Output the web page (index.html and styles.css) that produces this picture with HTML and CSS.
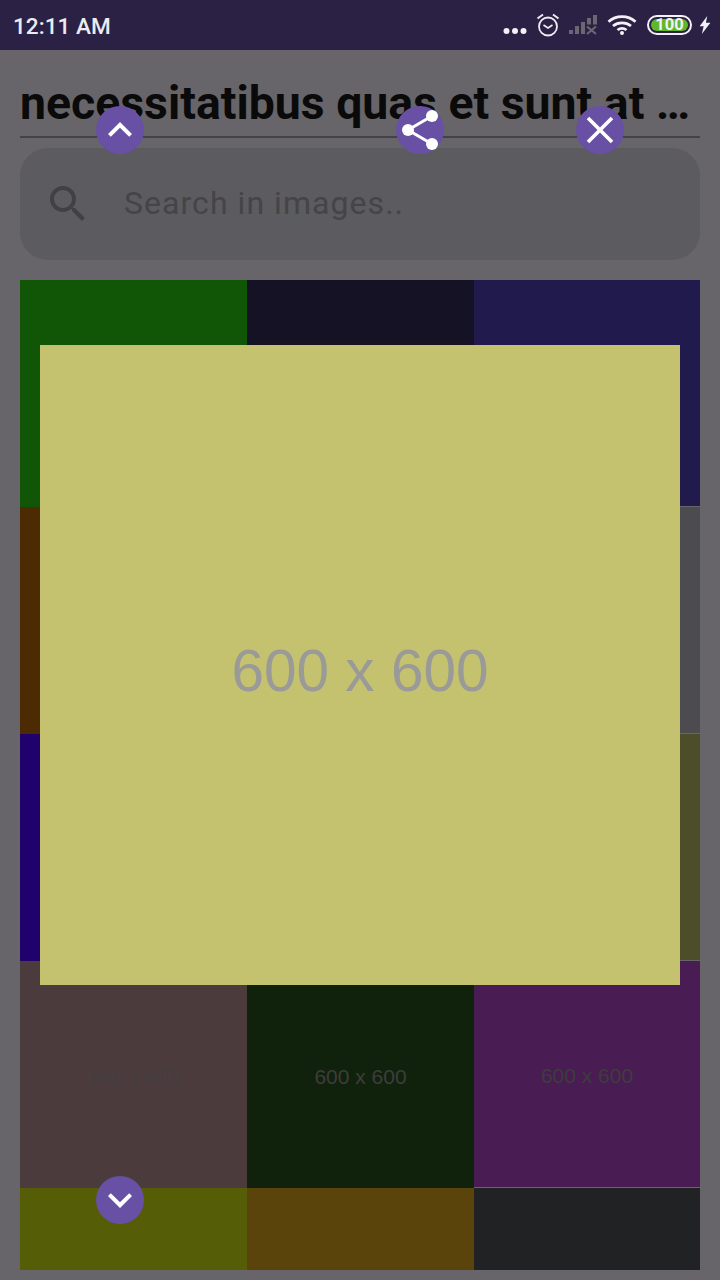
FILE: index.html
```html
<!DOCTYPE html>
<html lang="en">
<head>
<meta charset="utf-8">
<title>Images</title>
<link rel="stylesheet" href="styles.css">
</head>
<body>
<div class="page">
  <header class="status">
    <span class="time">12:11 AM</span>
    <div class="status-icons">
      <svg class="ic-dots" width="24" height="8" viewBox="0 0 24 8"><circle cx="3.500" cy="4" r="3"/><circle cx="12" cy="4" r="3"/><circle cx="20.500" cy="4" r="3"/></svg>
      <svg class="ic-alarm" width="26" height="24" viewBox="0 0 26 24"><circle cx="13" cy="13.500" r="9" stroke-width="1.800"/><path d="M8.500 12l4.500 3 4.500-3" stroke-width="1.600"/><path d="M2.500 5.500L8 1.500M23.500 5.500L18 1.500" stroke-width="2"/></svg>
      <svg class="ic-signal" width="28" height="20" viewBox="0 0 28 20"><rect x="0" y="15" width="4" height="4"/><rect x="6" y="11" width="4" height="8"/><rect x="12" y="7" width="4" height="12"/><rect x="18" y="3" width="4" height="6.500"/><rect x="24" y="0" width="4" height="9.500"/><path d="M18 11.500l9 7.500M27 11.500l-9 7.500" stroke="#6b6672" stroke-width="2.200" fill="none"/></svg>
      <svg class="ic-wifi" width="30" height="20" viewBox="0 0 30 20"><path d="M1.500 6.800C9 0 21 0 28.500 6.800"/><path d="M6 11c5-4.200 13-4.200 18 0"/><path d="M10.500 15c2.700-2 6.300-2 9 0"/><circle class="wifi-dot" cx="15" cy="18" r="2"/></svg>
      <div class="battery"><span class="battery-level">100</span></div>
      <svg class="ic-bolt" width="14" height="18" viewBox="0 0 14 20"><path d="M9.500 0L1 11.500h4.500L3.500 20 13 7.500H8z"/></svg>
    </div>
  </header>

  <main class="content">
    <h1 class="title">necessitatibus quas et sunt at …</h1>
    <div class="search">
      <svg class="search-icon" width="48" height="48" viewBox="0 0 24 24"><path d="M15.500 14h-.79l-.28-.27A6.471 6.471 0 0 0 16 9.500 6.500 6.500 0 1 0 9.500 16c1.610 0 3.090-.59 4.230-1.570l.27.28v.79l5 4.990L20.490 19l-4.990-5zm-6 0C7.010 14 5 11.990 5 9.500S7.010 5 9.500 5 14 7.010 14 9.500 11.990 14 9.500 14z"/></svg>
      <span class="search-text">Search in images..</span>
    </div>
    <div class="grid">
      <div class="tile c1"><span>600 x 600</span></div>
      <div class="tile c2"><span>600 x 600</span></div>
      <div class="tile c3"><span>600 x 600</span></div>
      <div class="tile c4"><span>600 x 600</span></div>
      <div class="tile c5"><span>600 x 600</span></div>
      <div class="tile c6"><span>600 x 600</span></div>
      <div class="tile c7"><span>600 x 600</span></div>
      <div class="tile c8"><span>600 x 600</span></div>
      <div class="tile c9"><span>600 x 600</span></div>
      <div class="tile c10"><span class="faint">600 x 600</span></div>
      <div class="tile c11"><span>600 x 600</span></div>
      <div class="tile c12"><span>600 x 600</span></div>
      <div class="tile c13"></div>
      <div class="tile c14"></div>
      <div class="tile c15"></div>
    </div>
  </main>

  <div class="preview">600 x 600</div>

  <button class="fab fab-up" aria-label="Previous"><svg width="48" height="48" viewBox="0 0 24 24"><path d="M7.410 15.410L12 10.830l4.590 4.580L18 14l-6-6-6 6z"/></svg></button>
  <button class="fab fab-share" aria-label="Share"><svg width="48" height="48" viewBox="0 0 48 48"><path class="share-line" d="M36 10L12 24l24 14"/><circle cx="36" cy="10" r="6"/><circle cx="12" cy="24" r="6"/><circle cx="36" cy="38" r="6"/></svg></button>
  <button class="fab fab-close" aria-label="Close"><svg width="48" height="48" viewBox="0 0 48 48"><path class="close-x" d="M12 12l24 24M36 12L12 36"/></svg></button>
  <button class="fab fab-down" aria-label="Next"><svg width="48" height="48" viewBox="0 0 24 24"><path d="M7.410 8.590L12 13.170l4.590-4.580L18 10l-6 6-6-6z"/></svg></button>
</div>
</body>
</html>
```

FILE: styles.css
```css
* { box-sizing: border-box; }
html, body { margin: 0; padding: 0; }
body { background: #676569; font-family: "Roboto", "Liberation Sans", sans-serif; }
.page { position: relative; width: 720px; height: 1280px; overflow: hidden; background: #676569; }

.status { height: 50px; background: #2a2145; display: flex; align-items: center; justify-content: space-between; padding: 2px 8px 0 13px; }
.time { font-size: 22.600px; font-weight: 500; color: #ecebf1; }
.status-icons { display: flex; align-items: center; margin-top: -2px; }
.status-icons svg { display: block; flex: none; }
.ic-dots { fill: #f2f1f5; margin-top: 11px; }
.ic-alarm { fill: none; stroke: #eeedf2; margin-left: 8px; }
.ic-signal { fill: #6b6672; margin-left: 8px; }
.ic-wifi { fill: none; stroke: #f2f1f5; stroke-width: 2.800; margin-left: 10px; }
.wifi-dot { fill: #f2f1f5; stroke: none; }
.battery { margin-left: 10px; width: 45px; height: 20px; border: 2px solid #f2f1f5; border-radius: 10px; padding: 2px; display: flex; }
.battery-level { flex: 1; background: #5fb82b; border-radius: 6px; color: #f2f1f5; font-size: 16.500px; font-weight: 700; line-height: 12px; text-align: center; }
.ic-bolt { fill: #f2f1f5; margin-left: 6px; }

.content { padding: 0 20px; }
.title { margin: 0; height: 88px; padding-top: 24px; border-bottom: 2px solid #444247; font-size: 46.400px; line-height: 58px; font-weight: 700; color: #0a0a0a; white-space: nowrap; overflow: hidden; }
.search { margin-top: 10px; height: 112px; background: #5c5b5f; border-radius: 28px; display: flex; align-items: center; padding: 0 0 0 24px; }
.search-icon { display: block; fill: #414044; flex: none; }
.search-text { margin-left: 32px; margin-bottom: 2px; font-size: 32px; letter-spacing: 1.050px; color: #454447; }

.grid { margin-top: 20px; display: grid; grid-template-columns: 227px 227px 226px; grid-auto-rows: 227px; height: 990px; overflow: hidden; }
.tile { display: flex; align-items: center; justify-content: center; padding-top: 4px; font-family: "Liberation Sans", sans-serif; font-size: 21px; color: #3d3d3d; }
.tile:nth-child(3n) { margin-bottom: 1px; }
.c1 { background: #115506; }
.c2 { background: #161226; }
.c3 { background: #211a4c; }
.c4 { background: #4d2b02; }
.c5 { background: #222222; }
.c6 { background: #4b4b50; }
.c7 { background: #21016b; }
.c8 { background: #222222; }
.c9 { background: #4d4d2a; }
.c10 { background: #4c3b3c; }
.c11 { background: #10220c; }
.c12 { background: #4a1c54; }
.c13 { background: #555d06; }
.c14 { background: #5a440b; }
.c15 { background: #212224; }
.c10 .faint { color: #454040; }

.preview { position: absolute; left: 40px; top: 345px; width: 640px; height: 640px; padding-top: 10px; background: #c4c26f; display: flex; align-items: center; justify-content: center; font-family: "Liberation Sans", sans-serif; font-size: 58.500px; color: #9a9a98; }

.fab { position: absolute; width: 48px; height: 48px; border: 0; padding: 0; border-radius: 50%; background: #6851a5; display: flex; align-items: center; justify-content: center; }
.fab svg { display: block; fill: #fff; flex: none; }
.share-line { fill: none; stroke: #fff; stroke-width: 3; }
.close-x { fill: none; stroke: #fff; stroke-width: 3.600; }
.fab-up { left: 96px; top: 106px; }
.fab-share { left: 396px; top: 106px; }
.fab-close { left: 576px; top: 106px; }
.fab-down { left: 96px; top: 1176px; }
```
